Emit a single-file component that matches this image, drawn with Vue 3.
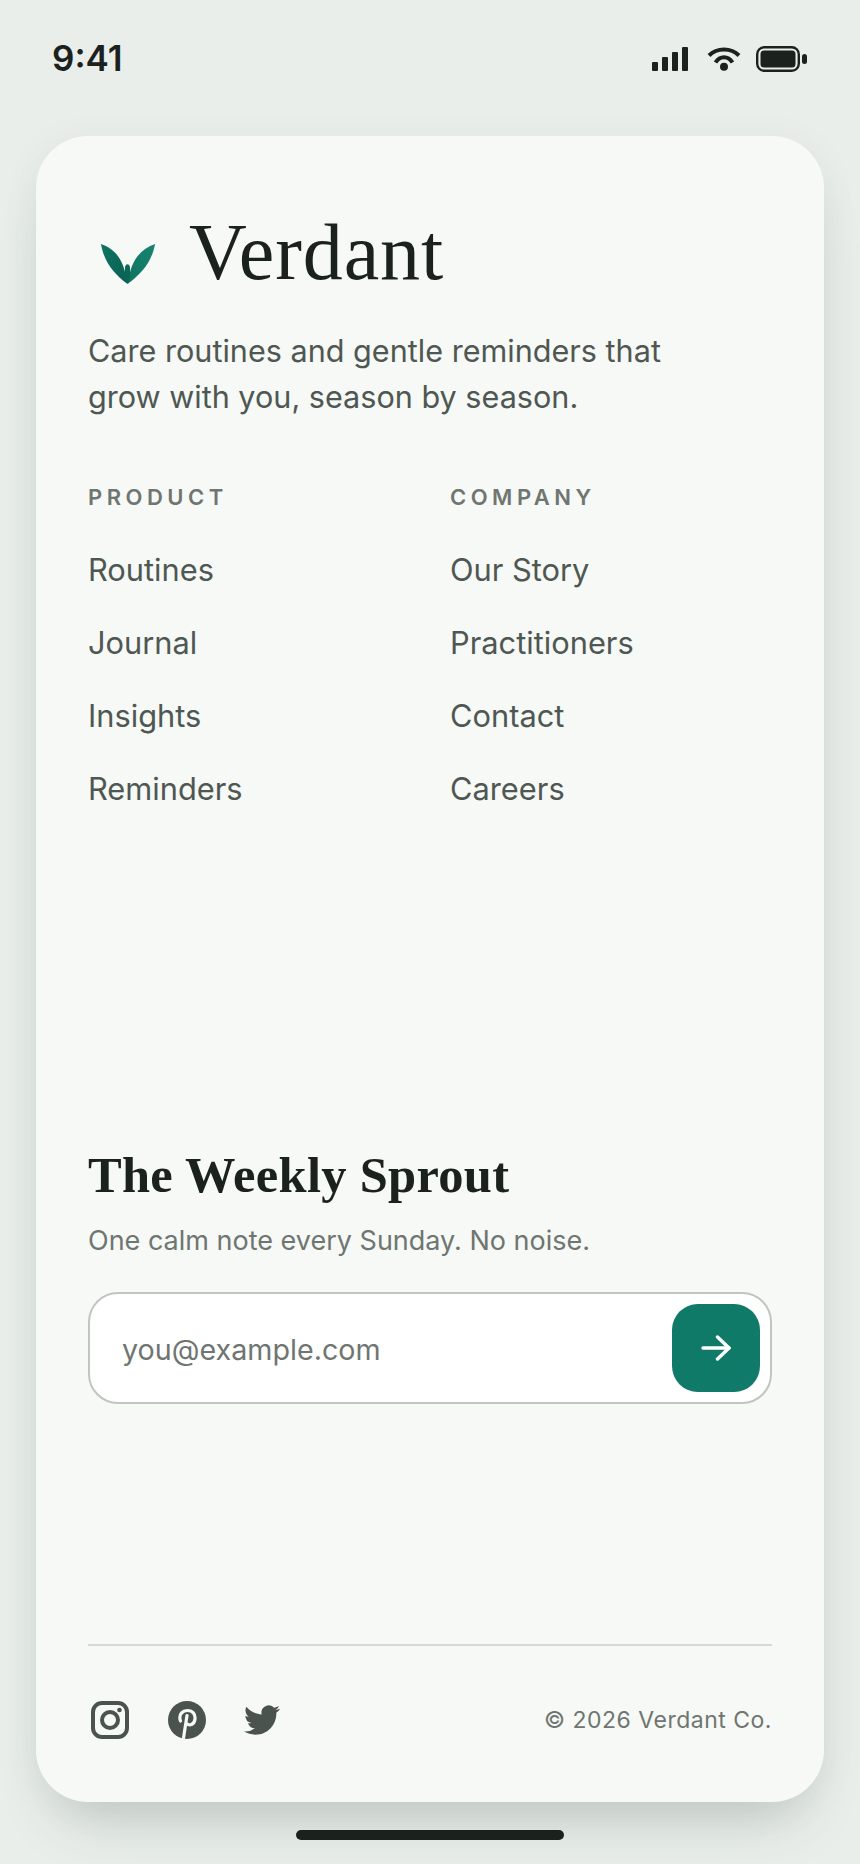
<script setup>
const columns = [
  { title: 'Product', links: ['Routines', 'Journal', 'Insights', 'Reminders'] },
  { title: 'Company', links: ['Our Story', 'Practitioners', 'Contact', 'Careers'] }
]
</script>

<template>
  <div class="page">
    <header class="status">
      <span class="time">9:41</span>
      <div class="status-icons">
        <svg class="signal" width="36" height="24" viewBox="0 0 36 24" fill="#1b221e">
          <rect x="0" y="15" width="6" height="9" rx="1" />
          <rect x="10" y="10" width="6" height="14" rx="1" />
          <rect x="20" y="5" width="6" height="19" rx="1" />
          <rect x="30" y="0" width="6" height="24" rx="1" />
        </svg>
        <svg width="34" height="24" viewBox="0 0 34 24" fill="none" stroke="#1b221e" stroke-width="4">
          <path d="M2 8.500C10 .5 24 .5 32 8.500" />
          <path d="M8.500 15.500C13 8.500 21 8.500 25.500 15.500" />
          <circle cx="17" cy="19.700" r="4" fill="#1b221e" stroke="none" />
        </svg>
        <svg width="52" height="26" viewBox="0 0 52 26">
          <rect x="1.200" y="1.200" width="41.600" height="23.600" rx="7" fill="none" stroke="#1b221e" stroke-width="2.400" />
          <rect x="4.500" y="4.500" width="35" height="17" rx="3.500" fill="#1b221e" />
          <rect x="46" y="8" width="5" height="10" rx="2.500" fill="#1b221e" />
        </svg>
      </div>
    </header>

    <main class="card">
      <div class="brand">
        <svg class="logo" width="56" height="44" viewBox="0 0 56 44">
          <defs>
            <linearGradient id="leaf-a" x1="0" y1="0" x2="1" y2="1">
              <stop offset="0" stop-color="#0e7463" />
              <stop offset="1" stop-color="#0b5f52" />
            </linearGradient>
            <linearGradient id="leaf-b" x1="0" y1="1" x2="1" y2="0">
              <stop offset="0" stop-color="#0f7261" />
              <stop offset="1" stop-color="#178670" />
            </linearGradient>
          </defs>
          <path d="M1 2C15 7 24 17 27.500 42C14 32 4 20 1 2Z" fill="url(#leaf-a)" />
          <path d="M55 2C41 7 31 17 27.500 42C41 32 52 20 55 2Z" fill="url(#leaf-b)" />
          <path d="M25 26C25 21 30 21 30 26L30 36L27.500 42L25 36Z" fill="#0c6657" />
        </svg>
        <h1 class="name">Verdant</h1>
      </div>
      <p class="tagline">Care routines and gentle reminders that<br />grow with you, season by season.</p>

      <nav class="links">
        <div v-for="col in columns" :key="col.title" class="col">
          <h2 class="col-title">{{ col.title }}</h2>
          <a v-for="link in col.links" :key="link" class="link" href="#">{{ link }}</a>
        </div>
      </nav>

      <section class="news">
        <h2 class="news-title">The Weekly Sprout</h2>
        <p class="news-sub">One calm note every Sunday. No noise.</p>
        <form class="field" @submit.prevent>
          <input class="email" type="email" placeholder="you@example.com" />
          <button class="send" type="submit" aria-label="Subscribe">
            <svg width="30" height="26" viewBox="0 0 30 26" fill="none" stroke="#fff" stroke-width="3.400" stroke-linecap="round" stroke-linejoin="round">
              <path d="M2 13H28" />
              <path d="M16.500 2L28 13L16.500 24" />
            </svg>
          </button>
        </form>
      </section>

      <footer class="foot">
        <div class="social">
          <svg width="38" height="38" viewBox="0 0 38 38" fill="none" stroke="#4b534e" stroke-width="4">
            <rect x="2" y="2" width="34" height="34" rx="9" />
            <circle cx="19" cy="19" r="8" />
            <circle cx="28.500" cy="9" r="2.300" fill="#4b534e" stroke="none" />
          </svg>
          <svg width="38" height="38" viewBox="0 0 38 38">
            <circle cx="19" cy="19" r="19" fill="#4b534e" />
            <path d="M12.500 20C10 13 15 9.500 19.800 9.500C24.500 9.500 27.500 13 27 18C26.500 23 22 25.500 18.500 22.500M19 14.500L15.500 37" fill="none" stroke="#f6f9f6" stroke-width="3.200" stroke-linecap="round" />
          </svg>
          <svg width="36" height="36" viewBox="0 0 24 24" fill="#4b534e">
            <path d="M23.953 4.57a10 10 0 01-2.825.775 4.958 4.958 0 002.163-2.723c-.951.555-2.005.959-3.127 1.184a4.92 4.92 0 00-8.384 4.482C7.690 8.095 4.067 6.130 1.640 3.162a4.822 4.822 0 00-.666 2.475c0 1.710.870 3.213 2.188 4.096a4.904 4.904 0 01-2.228-.616v.060a4.923 4.923 0 003.946 4.827 4.996 4.996 0 01-2.212.085 4.936 4.936 0 004.604 3.417 9.867 9.867 0 01-6.102 2.105c-.390 0-.779-.023-1.170-.067a13.995 13.995 0 007.557 2.209c9.053 0 13.998-7.496 13.998-13.985 0-.210 0-.420-.015-.630A9.935 9.935 0 0024 4.590z" />
          </svg>
        </div>
        <span class="copy">© 2026 Verdant Co.</span>
      </footer>
    </main>

    <div class="home-bar"></div>
  </div>
</template>

<style scoped>
.page {
  width: 860px;
  height: 1864px;
  box-sizing: border-box;
  padding: 0 36px;
  background: #e9eeea;
  display: flex;
  flex-direction: column;
  font-family: Inter, 'Noto Sans', sans-serif;
  overflow: hidden;
}

.status {
  height: 136px;
  flex: none;
  box-sizing: border-box;
  padding: 38px 16px 0 16px;
  display: flex;
  justify-content: space-between;
  align-items: flex-start;
}

.time {
  font-size: 35px;
  line-height: 40px;
  font-weight: 600;
  color: #1b221e;
}

.status-icons {
  display: flex;
  align-items: center;
  gap: 15px;
  padding-top: 8px;
}

.signal {
  margin-right: 4px;
}

.card {
  height: 1666px;
  flex: none;
  box-sizing: border-box;
  padding: 77px 52px 0;
  background: #f6f9f6;
  border-radius: 52px;
  box-shadow: 0 6px 40px rgba(40, 60, 50, 0.05), 0 36px 60px -24px rgba(40, 60, 50, 0.22);
  display: flex;
  flex-direction: column;
}

.brand {
  display: flex;
  align-items: center;
  gap: 33px;
  height: 78px;
  padding-left: 12px;
}

.logo {
  flex: none;
  margin-top: 24px;
}

.name {
  margin: 0;
  font-family: 'Liberation Serif', serif;
  font-size: 80px;
  line-height: 78px;
  letter-spacing: 0.900px;
  font-weight: 400;
  color: #1b221e;
}

.tagline {
  margin: 37px 0 0;
  font-size: 30.600px;
  line-height: 46px;
  color: #4f5752;
}

.links {
  margin-top: 63px;
  display: grid;
  grid-template-columns: 1fr 1fr;
  column-gap: 40px;
}

.col {
  display: flex;
  flex-direction: column;
}

.col-title {
  margin: 0 0 37px;
  font-size: 22px;
  line-height: 28px;
  font-weight: 600;
  letter-spacing: 4.500px;
  text-transform: uppercase;
  color: #6f7570;
}

.link {
  height: 73px;
  line-height: 44px;
  font-size: 30.800px;
  color: #4f5752;
  text-decoration: none;
}

.news {
  margin-top: 307px;
}

.news-title {
  margin: 0;
  font-family: 'Liberation Serif', serif;
  font-size: 50.500px;
  line-height: 56px;
  letter-spacing: 0.300px;
  font-weight: 700;
  color: #1b221e;
}

.news-sub {
  margin: 18.500px 0 0;
  font-size: 27px;
  line-height: 38px;
  color: #6f7570;
}

.field {
  margin-top: 32.400px;
  height: 112px;
  box-sizing: border-box;
  padding: 10px 10px 10px 32px;
  background: #fff;
  border: 2px solid #c0c5bf;
  border-radius: 30px;
  display: flex;
  align-items: center;
}

.email {
  flex: 1;
  min-width: 0;
  border: none;
  outline: none;
  background: none;
  padding: 4px 0 0;
  font-family: inherit;
  font-size: 28.700px;
  color: #1b221e;
}

.email::placeholder {
  color: #6f7570;
  opacity: 1;
}

.send {
  width: 88px;
  height: 88px;
  flex: none;
  border: none;
  border-radius: 26px;
  padding: 0;
  background: linear-gradient(135deg, #0f7a68, #117a6a);
  display: flex;
  align-items: center;
  justify-content: center;
}

.foot {
  margin-top: 240px;
  border-top: 2px solid #d3dad6;
  padding-top: 55px;
  display: flex;
  justify-content: space-between;
  align-items: center;
}

.social {
  display: flex;
  align-items: center;
  gap: 38px;
  padding-left: 3px;
}

.social svg:first-child {
  margin-right: 1px;
}

.copy {
  font-size: 23px;
  letter-spacing: 0.500px;
  color: #6f7570;
}

.home-bar {
  flex: none;
  width: 268px;
  height: 10px;
  margin: 28px auto 0;
  border-radius: 5px;
  background: #1b221e;
}
</style>
